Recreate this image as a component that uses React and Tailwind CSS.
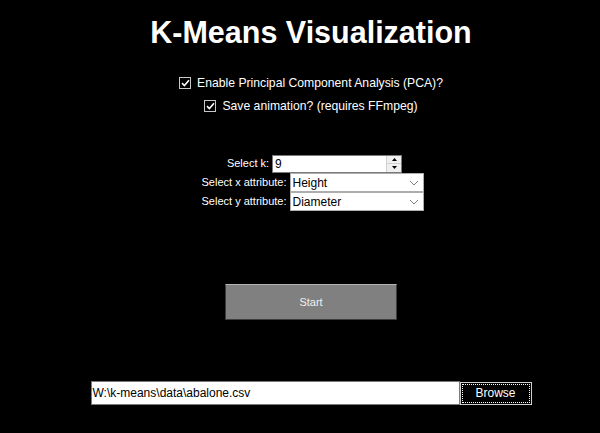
import React from 'react';

const Check = ({ label }) => (
  <label className="flex h-[20px] items-center gap-[6px]">
    <span className="flex h-[12px] w-[12px] items-center justify-center border border-[#c8c8c8] bg-black">
      <svg width="9" height="8" viewBox="0 0 9 8">
        <path d="M1 4.2 L3.4 6.5 L8 1.3" fill="none" stroke="#ffffff" strokeWidth="1.6" />
      </svg>
    </span>
    <span className="text-[12.2px] leading-none text-white">{label}</span>
  </label>
);

const Chevron = () => (
  <svg width="10" height="6" viewBox="0 0 10 6" className="mr-[4px]">
    <path d="M1 1 L5 5 L9 1" fill="none" stroke="#808080" strokeWidth="1" />
  </svg>
);

const Combo = ({ value }) => (
  <div className="flex h-[19px] w-[134px] items-center justify-between border border-[#adadad] bg-white pl-[2px]">
    <span className="text-[12px] leading-none text-black">{value}</span>
    <Chevron />
  </div>
);

const App = () => {
  return (
    <div
      className="flex h-[433px] w-[600px] flex-col items-center overflow-hidden bg-black pl-[22px]"
      style={{ fontFamily: '"Liberation Sans", Arial, sans-serif' }}
    >
      <h1 className="mt-[14px] h-[36px] text-[30.5px] font-bold leading-[36px] text-white">
        K-Means Visualization
      </h1>

      <div className="mt-[23px] flex flex-col items-center gap-[3px]">
        <Check label="Enable Principal Component Analysis (PCA)?" />
        <Check label="Save animation? (requires FFmpeg)" />
      </div>

      <div className="mt-[38px] flex flex-col items-center pl-[3px] text-[11px] text-white">
        <div className="flex h-[19px] items-center gap-[3px] pl-[4px]">
          <span>Select k:</span>
          <div className="flex h-[18px] w-[130px] items-center justify-between border border-[#7a7a7a] bg-white pl-[2px]">
            <span className="text-[12px] leading-none text-black">9</span>
            <div className="flex h-full w-[15px] flex-col border-l border-[#d0d0d0]">
              <div className="flex flex-1 items-center justify-center border-b border-[#d0d0d0] bg-[#f0f0f0]">
                <svg width="5" height="3" viewBox="0 0 5 3"><path d="M0 3 L2.5 0 L5 3 Z" fill="#000" /></svg>
              </div>
              <div className="flex flex-1 items-center justify-center bg-[#f0f0f0]">
                <svg width="5" height="3" viewBox="0 0 5 3"><path d="M0 0 L2.5 3 L5 0 Z" fill="#000" /></svg>
              </div>
            </div>
          </div>
        </div>
        <div className="flex items-center gap-[3px]">
          <span>Select x attribute:</span>
          <Combo value="Height" />
        </div>
        <div className="flex items-center gap-[3px]">
          <span>Select y attribute:</span>
          <Combo value="Diameter" />
        </div>
      </div>

      <button className="mt-[73px] flex h-[36px] w-[172px] items-center justify-center border border-[#3c3c3c] border-t-[#b4b4b4] bg-[#808080] text-[11px] text-[#f0f0f0]">
        Start
      </button>

      <div className="mt-[61px] flex items-center">
        <div className="flex h-[24px] w-[369px] items-center border border-[#7a7a7a] bg-white pl-[1px]">
          <span className="text-[12px] leading-none text-black">W:\k-means\data\abalone.csv</span>
        </div>
        <button className="flex h-[23px] w-[72px] items-center justify-center border border-[#d0d0d0] bg-black p-[1px]">
          <span className="flex h-full w-full items-center justify-center border border-dotted border-white text-[12px] text-white">
            Browse
          </span>
        </button>
      </div>
    </div>
  );
};

export default App;
